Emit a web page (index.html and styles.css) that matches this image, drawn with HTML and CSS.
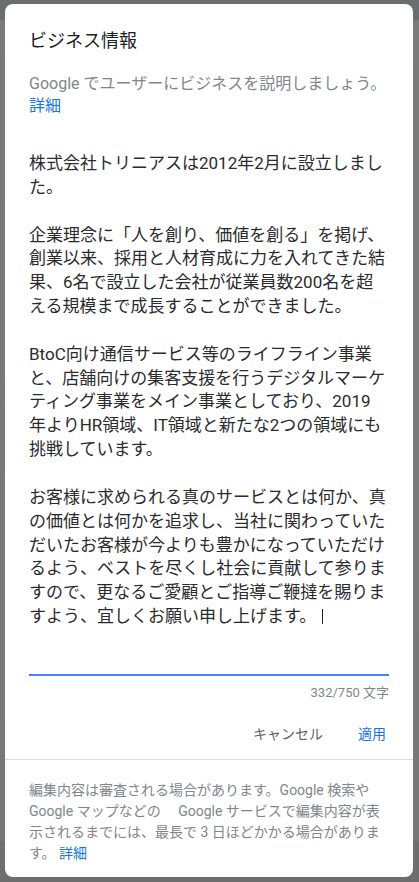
FILE: index.html
```html
<!DOCTYPE html>
<html lang="ja">
<head>
<meta charset="utf-8">
<title>ビジネス情報</title>
<link rel="stylesheet" href="styles.css">
</head>
<body>
<div class="backdrop">
  <div class="dialog">
    <h1 class="title">ビジネス情報</h1>
    <p class="subtitle">Google でユーザーにビジネスを説明しましょう。<br><a class="link" href="#">詳細</a></p>
    <div class="field">
      <div class="textarea"><span class="line">株式会社トリニアスは2012年2月に設立しまし</span><span class="line">た。</span><span class="line"> </span><span class="line">企業理念に「人を創り、価値を創る」を掲げ、</span><span class="line">創業以来、採用と人材育成に力を入れてきた結</span><span class="line">果、6名で設立した会社が従業員数200名を超</span><span class="line">える規模まで成長することができました。</span><span class="line"> </span><span class="line">BtoC向け通信サービス等のライフライン事業</span><span class="line">と、店舗向けの集客支援を行うデジタルマーケ</span><span class="line">ティング事業をメイン事業としており、2019</span><span class="line">年よりHR領域、IT領域と新たな2つの領域にも</span><span class="line">挑戦しています。</span><span class="line"> </span><span class="line">お客様に求められる真のサービスとは何か、真</span><span class="line">の価値とは何かを追求し、当社に関わっていた</span><span class="line">だいたお客様が今よりも豊かになっていただけ</span><span class="line">るよう、ベストを尽くし社会に貢献して参りま</span><span class="line">すので、更なるご愛顧とご指導ご鞭撻を賜りま</span><span class="line">すよう、宜しくお願い申し上げます。<span class="caret"></span></span></div>
      <div class="underline"></div>
      <div class="counter">332/750 文字</div>
    </div>
    <div class="actions">
      <button class="btn btn-cancel">キャンセル</button>
      <button class="btn btn-apply">適用</button>
    </div>
    <div class="divider"></div>
    <p class="note"><span class="line">編集内容は審査される場合があります。Google 検索や</span><span class="line">Google マップなどの　 Google サービスで編集内容が表</span><span class="line">示されるまでには、最長で 3 日ほどかかる場合がありま</span><span class="line">す。 <a class="link" href="#">詳細</a></span></p>
  </div>
</div>
</body>
</html>
```

FILE: styles.css
```css
html, body {
  margin: 0;
  padding: 0;
}
body {
  background: linear-gradient(to bottom, #6c6d6f 0, #6c6d6f 20px, #7a7a7a 20px, #777777 840px, #6e6e6e 842px);
  font-family: Roboto, "Noto Sans CJK JP", sans-serif;
  width: 419px;
  height: 882px;
  overflow: hidden;
}
.backdrop {
  padding: 4px 6px 5px 5px;
}
.dialog {
  background: #ffffff;
  border-radius: 8px;
  height: 873px;
  box-sizing: border-box;
  padding-top: 25px;
  display: flex;
  flex-direction: column;
}
.title {
  margin: 0 24px;
  font-size: 18px;
  line-height: 24px;
  font-weight: 400;
  color: #202124;
}
.subtitle {
  margin: 20px 24px 0;
  font-size: 16px;
  line-height: 22px;
  color: #80868b;
}
.link {
  color: #1a73e8;
  text-decoration: none;
}
.field {
  margin: 35px 24px 0;
}
.textarea {
  font-size: 17px;
  line-height: 23.84px;
  color: #2a2b2e;
  height: 522px;
}
.line {
  display: block;
  white-space: pre;
}
.caret {
  display: inline-block;
  width: 1px;
  height: 15px;
  background: #202124;
  margin-left: 6px;
  vertical-align: -2px;
}
.underline {
  height: 2px;
  background: #4285f4;
}
.counter {
  margin-top: 8px;
  text-align: right;
  font-size: 13px;
  line-height: 18px;
  color: #80868b;
}
.actions {
  margin: 14px 27px 0 24px;
  display: flex;
  justify-content: flex-end;
  gap: 35px;
  height: 36px;
  align-items: center;
}
.btn {
  border: none;
  background: none;
  padding: 0;
  font-family: Roboto, "Noto Sans CJK JP", sans-serif;
  font-size: 14px;
  line-height: 20px;
}
.btn-cancel {
  color: #5f6368;
}
.btn-apply {
  color: #1a73e8;
}
.divider {
  margin-top: 7px;
  height: 1px;
  background: #dadce0;
}
.note {
  margin: 20px 24px 0;
  font-size: 14px;
  line-height: 21px;
  color: #80868b;
}
```
